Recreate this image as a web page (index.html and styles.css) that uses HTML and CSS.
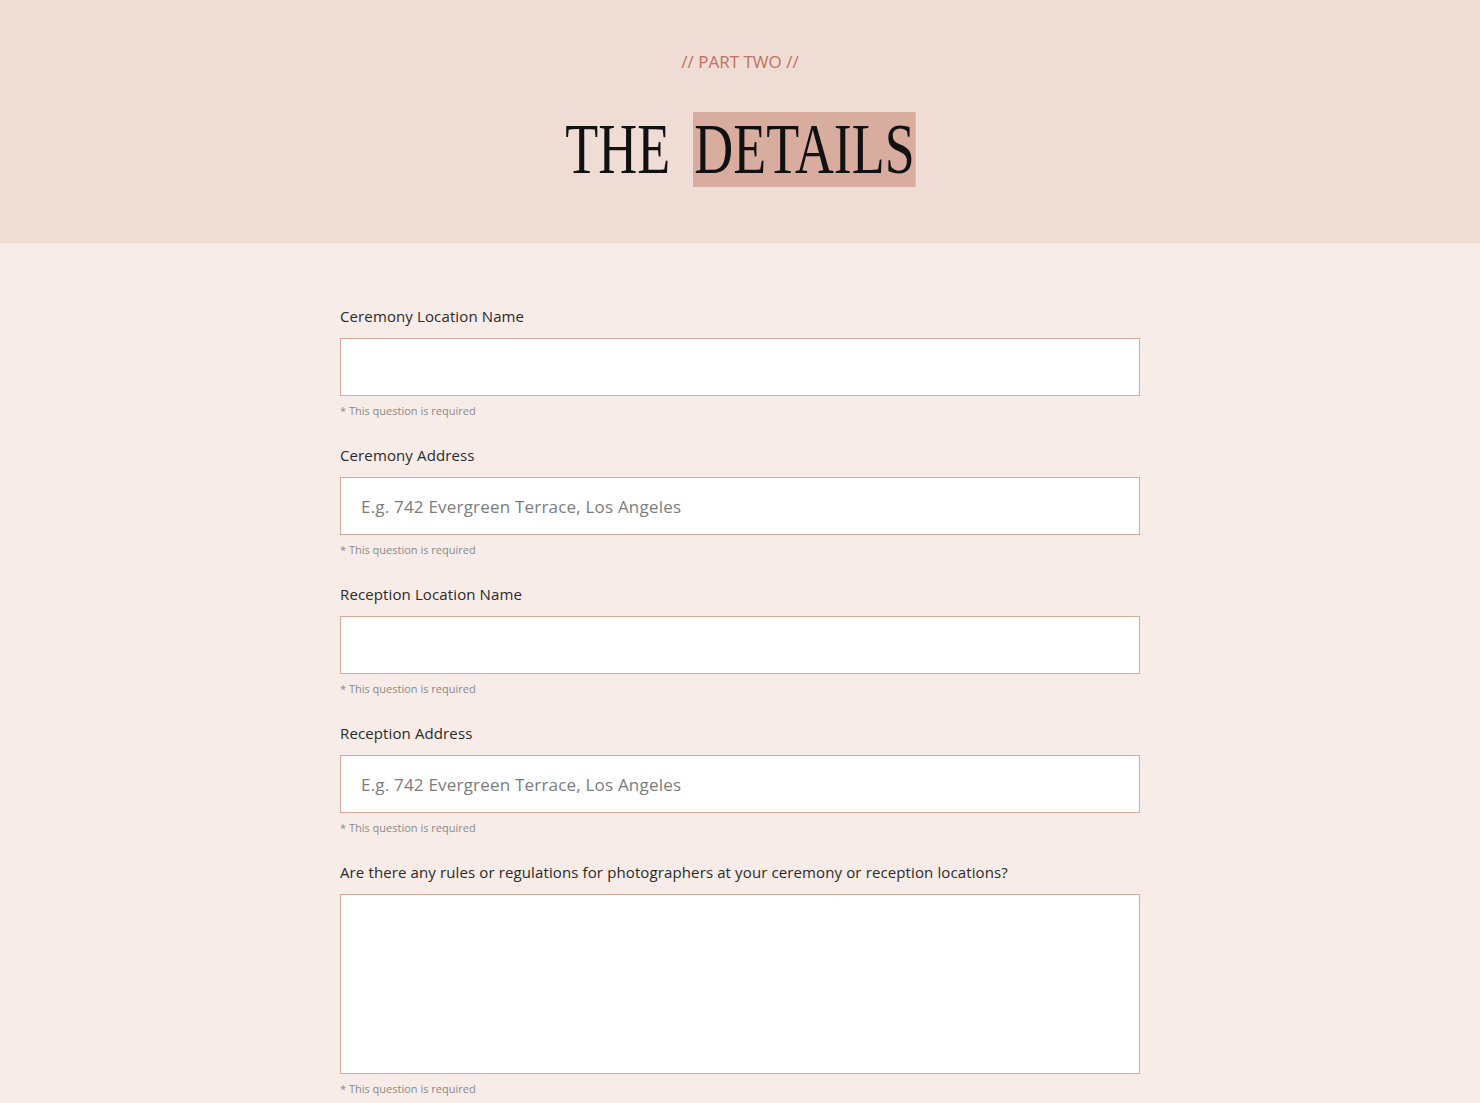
FILE: index.html
```html
<!DOCTYPE html>
<html>
<head>
<meta charset="utf-8">
<link rel="stylesheet" href="styles.css">
</head>
<body>
<header class="hero">
  <div class="eyebrow">// PART TWO //</div>
  <h1 class="title">THE <span class="hl">DETAILS</span></h1>
</header>
<main class="form">
  <div class="field">
    <label class="label">Ceremony Location Name</label>
    <input class="input" type="text">
    <div class="help">* This question is required</div>
  </div>
  <div class="field">
    <label class="label">Ceremony Address</label>
    <input class="input" type="text" placeholder="E.g. 742 Evergreen Terrace, Los Angeles">
    <div class="help">* This question is required</div>
  </div>
  <div class="field">
    <label class="label">Reception Location Name</label>
    <input class="input" type="text">
    <div class="help">* This question is required</div>
  </div>
  <div class="field">
    <label class="label">Reception Address</label>
    <input class="input" type="text" placeholder="E.g. 742 Evergreen Terrace, Los Angeles">
    <div class="help">* This question is required</div>
  </div>
  <div class="field">
    <label class="label">Are there any rules or regulations for photographers at your ceremony or reception locations?</label>
    <textarea class="input area"></textarea>
    <div class="help">* This question is required</div>
  </div>
</main>
</body>
</html>
```
FILE: styles.css
```css
* { box-sizing: border-box; }
html, body { margin: 0; padding: 0; }
body {
  background: #f7ece7;
  font-family: "Open Sans", "Lato", sans-serif;
  color: #2a2a2a;
}
.hero {
  background: #efddd5;
  height: 243px;
  display: flex;
  flex-direction: column;
  align-items: center;
  padding-top: 51px;
}
.eyebrow {
  color: #c0705d;
  font-size: 17px;
  line-height: 22px;
}
.title {
  margin: 39px 0 0 0;
  font-family: "Liberation Serif", serif;
  font-weight: normal;
  font-size: 71px;
  line-height: 75px;
  color: #111;
  transform: scaleX(0.76);
  white-space: nowrap;
}
.hl {
  background: #d8ada0;
  display: inline-block;
  padding: 0 1px 0 2px;
  margin-left: 12px;
}
.form {
  width: 800px;
  margin: 0 auto;
  padding-top: 63px;
}
.field {
  display: flex;
  flex-direction: column;
  margin-bottom: 27px;
}
.label {
  font-size: 15px;
  letter-spacing: 0.12px;
  line-height: 20px;
  color: #2a2a2a;
  margin-bottom: 12px;
}
.input {
  width: 800px;
  height: 58px;
  border: 1px solid #dba898;
  background: #fff;
  padding: 0 20px;
  font-family: "Open Sans", "Lato", sans-serif;
  font-size: 17px;
  letter-spacing: 0.2px;
  color: #333;
  outline: none;
  border-radius: 0;
  margin: 0;
}
.input::placeholder { color: #7c7c7c; }
.area {
  height: 180px;
  resize: none;
  display: block;
}
.help {
  font-size: 11px;
  color: #8a8a8a;
  margin-top: 8px;
  line-height: 14px;
}
```
